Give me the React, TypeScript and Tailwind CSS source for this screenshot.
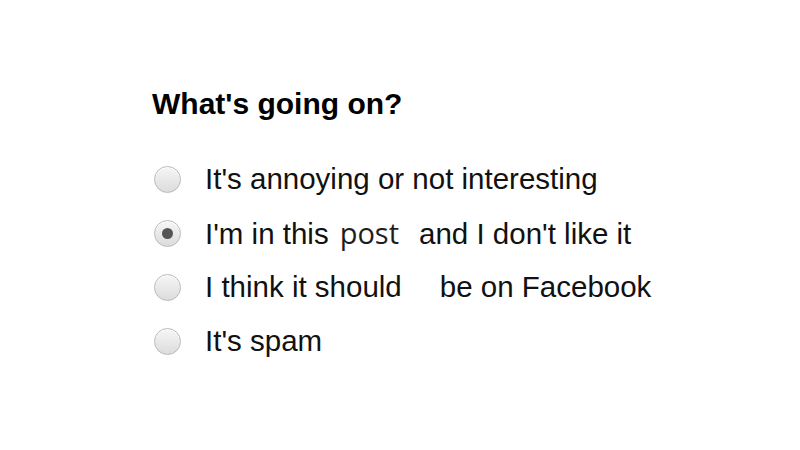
import { useState } from 'react';

type Option = { id: string; label: React.ReactNode };

const FONT = "font-['Liberation_Sans',Arial,sans-serif]";

const OPTIONS: Option[] = [
  { id: 'annoying', label: "It's annoying or not interesting" },
  {
    id: 'in-post',
    label: (
      <>
        <span>I'm in this</span>
        <span className="ml-[11px] mr-[20px] font-['Open_Sans',sans-serif] text-[29px] text-[#1e1e1e]">post</span>
        <span>and I don't like it</span>
      </>
    ),
  },
  {
    id: 'not-on-fb',
    label: (
      <>
        <span className="relative">
          I think it should
          {/* the word after "should" is blanked out in the source */}
          <span className="absolute right-[-3px] top-[26px] h-[10px] w-[8px] bg-white" />
        </span>
        <span className="inline-block w-[38px]" />
        <span>be on Facebook</span>
      </>
    ),
  },
  { id: 'spam', label: "It's spam" },
];

function Radio({ checked }: { checked: boolean }) {
  return (
    <span className="flex h-[27px] w-[27px] shrink-0 items-center justify-center rounded-full border border-[#b9b9b9] bg-gradient-to-b from-[#f6f6f6] to-[#dcdcdc] shadow-[inset_0_1px_0_#ffffff]">
      {checked && <span className="h-[11px] w-[11px] rounded-full bg-[#555555]" />}
    </span>
  );
}

export default function App() {
  const [selected, setSelected] = useState('in-post');

  return (
    <div className={`h-[450px] w-[800px] overflow-hidden bg-white ${FONT} text-[#111111]`}>
      <div className="pl-[152px] pt-[86px]">
        <h2 className="text-[30px] font-bold leading-[36px] text-black">What's going on?</h2>

        <div className="mt-[30px] flex flex-col">
          {OPTIONS.map((opt) => (
            <label
              key={opt.id}
              className="flex h-[54px] cursor-pointer items-center gap-[24px] pl-[2px]"
              onClick={() => setSelected(opt.id)}
            >
              <Radio checked={selected === opt.id} />
              <span className="whitespace-pre text-[29.5px] leading-[54px]">{opt.label}</span>
            </label>
          ))}
        </div>
      </div>
    </div>
  );
}
